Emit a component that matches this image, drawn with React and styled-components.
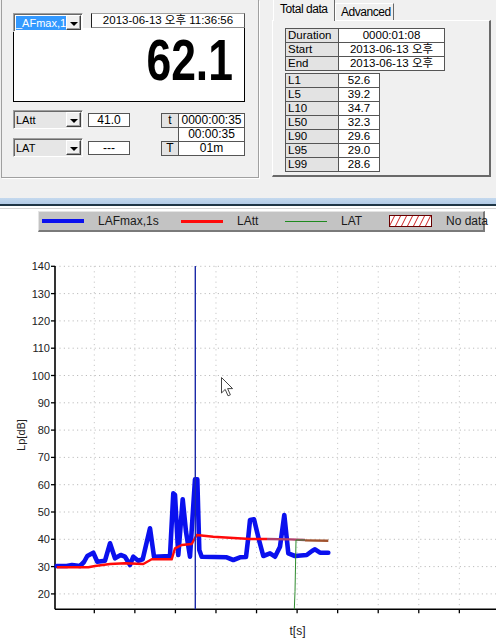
import React from "react";
import styled, { createGlobalStyle } from "styled-components";

const FONT = `"Liberation Sans", "Noto Sans CJK KR", Arial, sans-serif`;

const summary = [
  ["Duration", "0000:01:08"],
  ["Start", "2013-06-13 오후"],
  ["End", "2013-06-13 오후"],
];

const levels = [
  ["L1", "52.6"],
  ["L5", "39.2"],
  ["L10", "34.7"],
  ["L50", "32.3"],
  ["L90", "29.6"],
  ["L95", "29.0"],
  ["L99", "28.6"],
];

const times = [
  ["t", "0000:00:35"],
  ["", "00:00:35"],
  ["T", "01m"],
];

// chart geometry (page coordinates)
const AXIS_X = 55;
const AXIS_Y = 609.3;
const yOf = (db) => 266.3 + (140 - db) * 2.73;
const dbTicks = [20, 30, 40, 50, 60, 70, 80, 90, 100, 110, 120, 130, 140];
const xTicks = Array.from({ length: 10 }, (_, k) => 94.3 + 40.56 * k);

const lafmax = [
  [56.7, 566], [66.7, 566], [72, 565], [80, 566], [84, 562], [87.3, 556],
  [93.3, 552.7], [97.3, 561.7], [105, 560.7], [110, 543.3], [115, 558.3],
  [120.7, 555], [125, 556.7], [130, 565], [133.3, 556.7], [138.3, 560.7],
  [142.7, 559.3], [150, 528.3], [154, 556.7], [170, 556], [173.3, 493.3],
  [175, 495], [178.3, 555], [182.7, 499.3], [186, 531.7], [190, 556.7],
  [195, 479.3], [197.3, 479.3], [199.3, 550], [201.7, 556.7], [226.7, 557.3],
  [233.3, 560], [240, 557.3], [246, 557], [248, 540], [250, 520], [254, 519.3],
  [259, 540], [263.3, 556], [270, 553.3], [275, 556.7], [280, 546.7],
  [284.3, 515], [288.3, 553.3], [295, 556], [306.7, 555], [312, 551],
  [315, 549.3], [320, 552.7], [328.3, 552.7],
];

const latt = [
  [56.7, 567.3], [88.3, 567.3], [95, 566], [110, 564], [125, 563.3],
  [143.3, 564], [151.7, 559.3], [171.7, 559.3], [175, 548.3], [181.7, 545],
  [191.7, 544], [196.7, 535], [213.3, 536.7], [250, 539], [267, 539],
];

const pts = (list) => list.map((p) => p.join(",")).join(" ");

const Combo = ({ value, selected }) => (
  <ComboBox $selected={selected}>
    <ComboText $selected={selected}>{value}</ComboText>
    <ComboButton>
      <Arrow />
    </ComboButton>
  </ComboBox>
);

const Chart = () => (
  <ChartSvg width="496" height="409" viewBox="0 232 496 409">
    {dbTicks.map((db) => (
      <line key={"g" + db} x1={AXIS_X} x2="496" y1={yOf(db)} y2={yOf(db)}
        stroke="#bdbdbd" strokeWidth="1" strokeDasharray="1.2 3.2" />
    ))}
    {xTicks.map((x) => (
      <line key={"v" + x} x1={x} x2={x} y1="266" y2={AXIS_Y}
        stroke="#c8c8c8" strokeWidth="1" strokeDasharray="1.2 4" />
    ))}

    {dbTicks.map((db) => (
      <g key={"t" + db}>
        <line x1="51" x2={AXIS_X} y1={yOf(db)} y2={yOf(db)} stroke="#000" strokeWidth="1.3" />
        <text x="50" y={yOf(db) + 4} textAnchor="end" fontSize="11"
          fontFamily={FONT} fill="#222">{db}</text>
      </g>
    ))}
    {xTicks.map((x) => (
      <line key={"xt" + x} x1={x} x2={x} y1={AXIS_Y} y2={AXIS_Y + 4} stroke="#000" strokeWidth="1.3" />
    ))}

    <line x1={AXIS_X} x2={AXIS_X} y1="266" y2={AXIS_Y} stroke="#000" strokeWidth="1.6" />
    <line x1={AXIS_X} x2="496" y1={AXIS_Y} y2={AXIS_Y} stroke="#000" strokeWidth="1.6" />

    <text transform="translate(25 435) rotate(-90)" textAnchor="middle"
      fontSize="11" fontFamily={FONT} fill="#222">Lp[dB]</text>
    <text x="297.5" y="635" textAnchor="middle" fontSize="12"
      fontFamily={FONT} fill="#222">t[s]</text>

    <polyline points={pts(lafmax)} fill="none" stroke="#0a10ee" strokeWidth="4.6"
      strokeLinejoin="round" strokeLinecap="round" />
    <polyline points={pts(latt)} fill="none" stroke="#ff0a0a" strokeWidth="2.4"
      strokeLinejoin="round" />
    <polyline points="267,539 290,539.4 305,540" fill="none" stroke="#b0406a" strokeWidth="2.4" />
    <polyline points="305,540.4 328.3,540.8" fill="none" stroke="#a0522d" strokeWidth="2.4" />
    <polyline points="294.3,609.3 295,591.7 296,540 305,540" fill="none"
      stroke="#2e8b2e" strokeWidth="1" />

    <line x1="195.3" x2="195.3" y1="266" y2={AXIS_Y} stroke="#1c2aa8" strokeWidth="1.4" />

    <path d="M221.5 377.5 L221.5 393 L225.2 389.4 L228 395.8 L230.4 394.8 L227.6 388.6 L232.6 388.6 Z"
      fill="#fff" stroke="#444" strokeWidth="1" strokeLinejoin="round" />
  </ChartSvg>
);

const App = () => {
  return (
    <>
      <GlobalStyle />
      <Top>
        <Group>
          <Display>
            <DisplayHead>
              <Combo value="_AFmax,1s" selected />
              <DateBox>2013-06-13 오후 11:36:56</DateBox>
            </DisplayHead>
            <BigBox>
              <BigValue>62.1</BigValue>
            </BigBox>
          </Display>
          <Controls>
            <ComboRows>
              <ComboRow>
                <Combo value="LAtt" />
                <ValueBox>41.0</ValueBox>
              </ComboRow>
              <ComboRow>
                <Combo value="LAT" />
                <ValueBox>---</ValueBox>
              </ComboRow>
            </ComboRows>
            <TimeTable>
              {times.map(([label, value]) => (
                <TimeRow key={value}>
                  <TimeLabel $empty={!label}>{label}</TimeLabel>
                  <TimeValue>{value}</TimeValue>
                </TimeRow>
              ))}
            </TimeTable>
          </Controls>
        </Group>

        <TabArea>
          <TabStrip>
            <Tab $active>Total data</Tab>
            <Tab>Advanced</Tab>
          </TabStrip>
          <TabPanel>
            <DataGrid $valueWidth={105}>
              {summary.map(([label, value]) => (
                <React.Fragment key={label}>
                  <LabelCell>{label}</LabelCell>
                  <ValueCell>{value}</ValueCell>
                </React.Fragment>
              ))}
            </DataGrid>
            <DataGrid $valueWidth={40}>
              {levels.map(([label, value]) => (
                <React.Fragment key={label}>
                  <LabelCell>{label}</LabelCell>
                  <ValueCell>{value}</ValueCell>
                </React.Fragment>
              ))}
            </DataGrid>
          </TabPanel>
        </TabArea>
      </Top>

      <Band />
      <DarkLine />
      <Separator />

      <Legend>
        <LegendItem>
          <Swatch $color="#0a10ee" $thick={4} />
          <LegendText>LAFmax,1s</LegendText>
        </LegendItem>
        <LegendItem>
          <Swatch $color="#ff0a0a" $thick={3} />
          <LegendText>LAtt</LegendText>
        </LegendItem>
        <LegendItem>
          <Swatch $color="#1f8a1f" $thick={1} />
          <LegendText>LAT</LegendText>
        </LegendItem>
        <LegendItem>
          <svg width="43" height="12" viewBox="0 0 43 12">
            <defs>
              <pattern id="hatch" width="6" height="12" patternUnits="userSpaceOnUse">
                <line x1="0" y1="12" x2="6" y2="0" stroke="#d02020" strokeWidth="1" />
              </pattern>
            </defs>
            <rect x="0.5" y="0.5" width="42" height="11" fill="#fff" />
            <rect x="0.5" y="0.5" width="42" height="11" fill="url(#hatch)" stroke="#600" strokeWidth="1" />
          </svg>
          <LegendText>No data</LegendText>
        </LegendItem>
      </Legend>

      <Chart />
    </>
  );
};

export default App;

const GlobalStyle = createGlobalStyle`
  html, body {
    margin: 0;
    padding: 0;
    background: #fff;
  }
  body {
    font-family: ${FONT};
    font-size: 12px;
    color: #000;
  }
`;

export const Top = styled.section`
  display: flex;
  align-items: flex-start;
  height: 198px;
  background-color: #f0f0f0;
`;

export const Group = styled.div`
  box-sizing: border-box;
  width: 258px;
  height: 178px;
  margin-left: 1px;
  padding: 13px 0 0 11px;
  border: 1px solid #a0a0a0;
  border-top: none;
  box-shadow: 1px 1px 0 #fff;
`;

export const Display = styled.div`
  width: 232px;
`;

export const DisplayHead = styled.div`
  display: flex;
  align-items: flex-start;
  height: 15px;
`;

export const ComboBox = styled.div`
  position: relative;
  z-index: 1;
  box-sizing: border-box;
  display: flex;
  align-items: center;
  width: 70px;
  height: 19px;
  padding: 1px 1px 1px 2px;
  border: 1px solid;
  border-color: #a0a0a0 #fff #fff #a0a0a0;
  box-shadow: inset 1px 1px 0 #696969;
  background: ${(p) => (p.$selected ? "#fff" : "#e6e6e6")};
`;

export const ComboText = styled.div`
  flex: 1;
  overflow: hidden;
  white-space: nowrap;
  height: 14px;
  line-height: 14px;
  font-size: 11px;
  background: ${(p) => (p.$selected ? "#3399ff" : "transparent")};
  color: ${(p) => (p.$selected ? "#fff" : "#000")};
`;

export const ComboButton = styled.div`
  box-sizing: border-box;
  display: flex;
  align-items: center;
  justify-content: center;
  flex-shrink: 0;
  width: 15px;
  height: 15px;
  background: #f0f0f0;
  border: 1px solid;
  border-color: #fff #404040 #404040 #fff;
  box-shadow: inset -1px -1px 0 #a0a0a0;
`;

export const Arrow = styled.span`
  width: 0;
  height: 0;
  margin-top: 2px;
  border-left: 4px solid transparent;
  border-right: 4px solid transparent;
  border-top: 4px solid #000;
`;

export const DateBox = styled.div`
  box-sizing: border-box;
  width: 154px;
  height: 15px;
  margin-left: 8px;
  border: 1px solid;
  border-color: #a0a0a0 #505050 #8a8a8a #202020;
  background: #fff;
  text-align: center;
  font-size: 11.5px;
  line-height: 13px;
`;

export const BigBox = styled.div`
  box-sizing: border-box;
  display: flex;
  justify-content: flex-end;
  height: 74px;
  padding: 4px 11px 0 0;
  background: #fff;
  border: 1px solid #000;
  border-top: none;
`;

export const BigValue = styled.div`
  font-size: 57px;
  font-weight: bold;
  line-height: 57px;
  transform: scaleX(0.78);
  transform-origin: right center;
`;

export const Controls = styled.div`
  display: flex;
  align-items: flex-start;
  width: 232px;
  margin-top: 8px;
`;

export const ComboRows = styled.div`
  display: flex;
  flex-direction: column;
  gap: 9px;
`;

export const ComboRow = styled.div`
  display: flex;
  align-items: center;
  gap: 5px;
`;

export const ValueBox = styled.div`
  box-sizing: border-box;
  width: 42px;
  height: 14px;
  border: 1px solid #555;
  background: #fff;
  text-align: center;
  font-size: 12px;
  line-height: 12px;
`;

export const TimeTable = styled.div`
  margin: 3px 0 0 auto;
`;

export const TimeRow = styled.div`
  display: flex;
  & + & {
    margin-top: -1px;
  }
`;

export const TimeLabel = styled.div`
  box-sizing: border-box;
  width: 18px;
  height: 15px;
  margin-right: -1px;
  border: 1px solid ${(p) => (p.$empty ? "transparent" : "#555")};
  background: ${(p) => (p.$empty ? "transparent" : "#e3e3e3")};
  text-align: center;
  font-size: 12px;
  line-height: 13px;
`;

export const TimeValue = styled.div`
  box-sizing: border-box;
  width: 67px;
  height: 15px;
  border: 1px solid #555;
  background: #fff;
  text-align: center;
  font-size: 12px;
  line-height: 13px;
`;

export const TabArea = styled.div`
  width: 219px;
  margin-left: 13px;
`;

export const TabStrip = styled.div`
  display: flex;
  align-items: flex-end;
  height: 20px;
  padding-left: 1px;
`;

export const Tab = styled.div`
  position: relative;
  z-index: ${(p) => (p.$active ? 1 : 0)};
  box-sizing: border-box;
  width: ${(p) => (p.$active ? 62 : 59)}px;
  height: ${(p) => (p.$active ? 21 : 17)}px;
  margin-bottom: ${(p) => (p.$active ? -1 : 0)}px;
  padding: ${(p) => (p.$active ? "3px 0 0 6px" : "2px 0 0 5px")};
  background: #f0f0f0;
  border-left: 1px solid #fff;
  border-right: 1px solid #696969;
  border-top: ${(p) => (p.$active ? "none" : "1px solid #fff")};
  font-size: 12px;
  letter-spacing: -0.45px;
  line-height: 13px;
  white-space: nowrap;
`;

export const TabPanel = styled.div`
  box-sizing: border-box;
  display: flex;
  flex-direction: column;
  gap: 2px;
  height: 157px;
  padding: 7px 0 0 12px;
  border-top: 1px solid #fff;
  border-left: 1px solid #fff;
  border-right: 2px solid #696969;
  border-bottom: 2px solid #696969;
`;

export const DataGrid = styled.div`
  display: grid;
  grid-template-columns: 52px ${(p) => p.$valueWidth}px;
  grid-auto-rows: 13px;
  gap: 1px;
  width: max-content;
  padding: 1px;
  background: #555;
`;

export const LabelCell = styled.div`
  padding-left: 2px;
  background: #e3e3e3;
  font-size: 11.5px;
  line-height: 13px;
  white-space: nowrap;
`;

export const ValueCell = styled.div`
  background: #fff;
  text-align: center;
  font-size: 11.5px;
  line-height: 13px;
  white-space: nowrap;
`;

export const Band = styled.div`
  height: 6px;
  background: linear-gradient(#c4d9ee, #b3cbe6);
`;

export const DarkLine = styled.div`
  height: 2px;
  background: #1f3646;
`;

export const Separator = styled.div`
  height: 1px;
  margin-top: 2px;
  background: #d4d4d4;
`;

export const Legend = styled.div`
  box-sizing: border-box;
  display: grid;
  grid-template-columns: 139px 104px 104px 1fr;
  align-items: center;
  width: 447px;
  height: 21px;
  margin: 2px 0 0 38px;
  padding-left: 3px;
  background: #c3c3c3;
  border: 1px solid;
  border-color: #e4e4e4 #7a7a7a #7a7a7a #e4e4e4;
  border-width: 1px 2px 2px 1px;
`;

export const LegendItem = styled.div`
  display: flex;
  align-items: center;
  gap: 14px;
`;

export const Swatch = styled.span`
  display: block;
  width: 42px;
  height: ${(p) => p.$thick}px;
  background: ${(p) => p.$color};
`;

export const LegendText = styled.span`
  font-size: 12px;
  color: #1a1a1a;
  white-space: nowrap;
`;

export const ChartSvg = styled.svg`
  display: block;
`;
